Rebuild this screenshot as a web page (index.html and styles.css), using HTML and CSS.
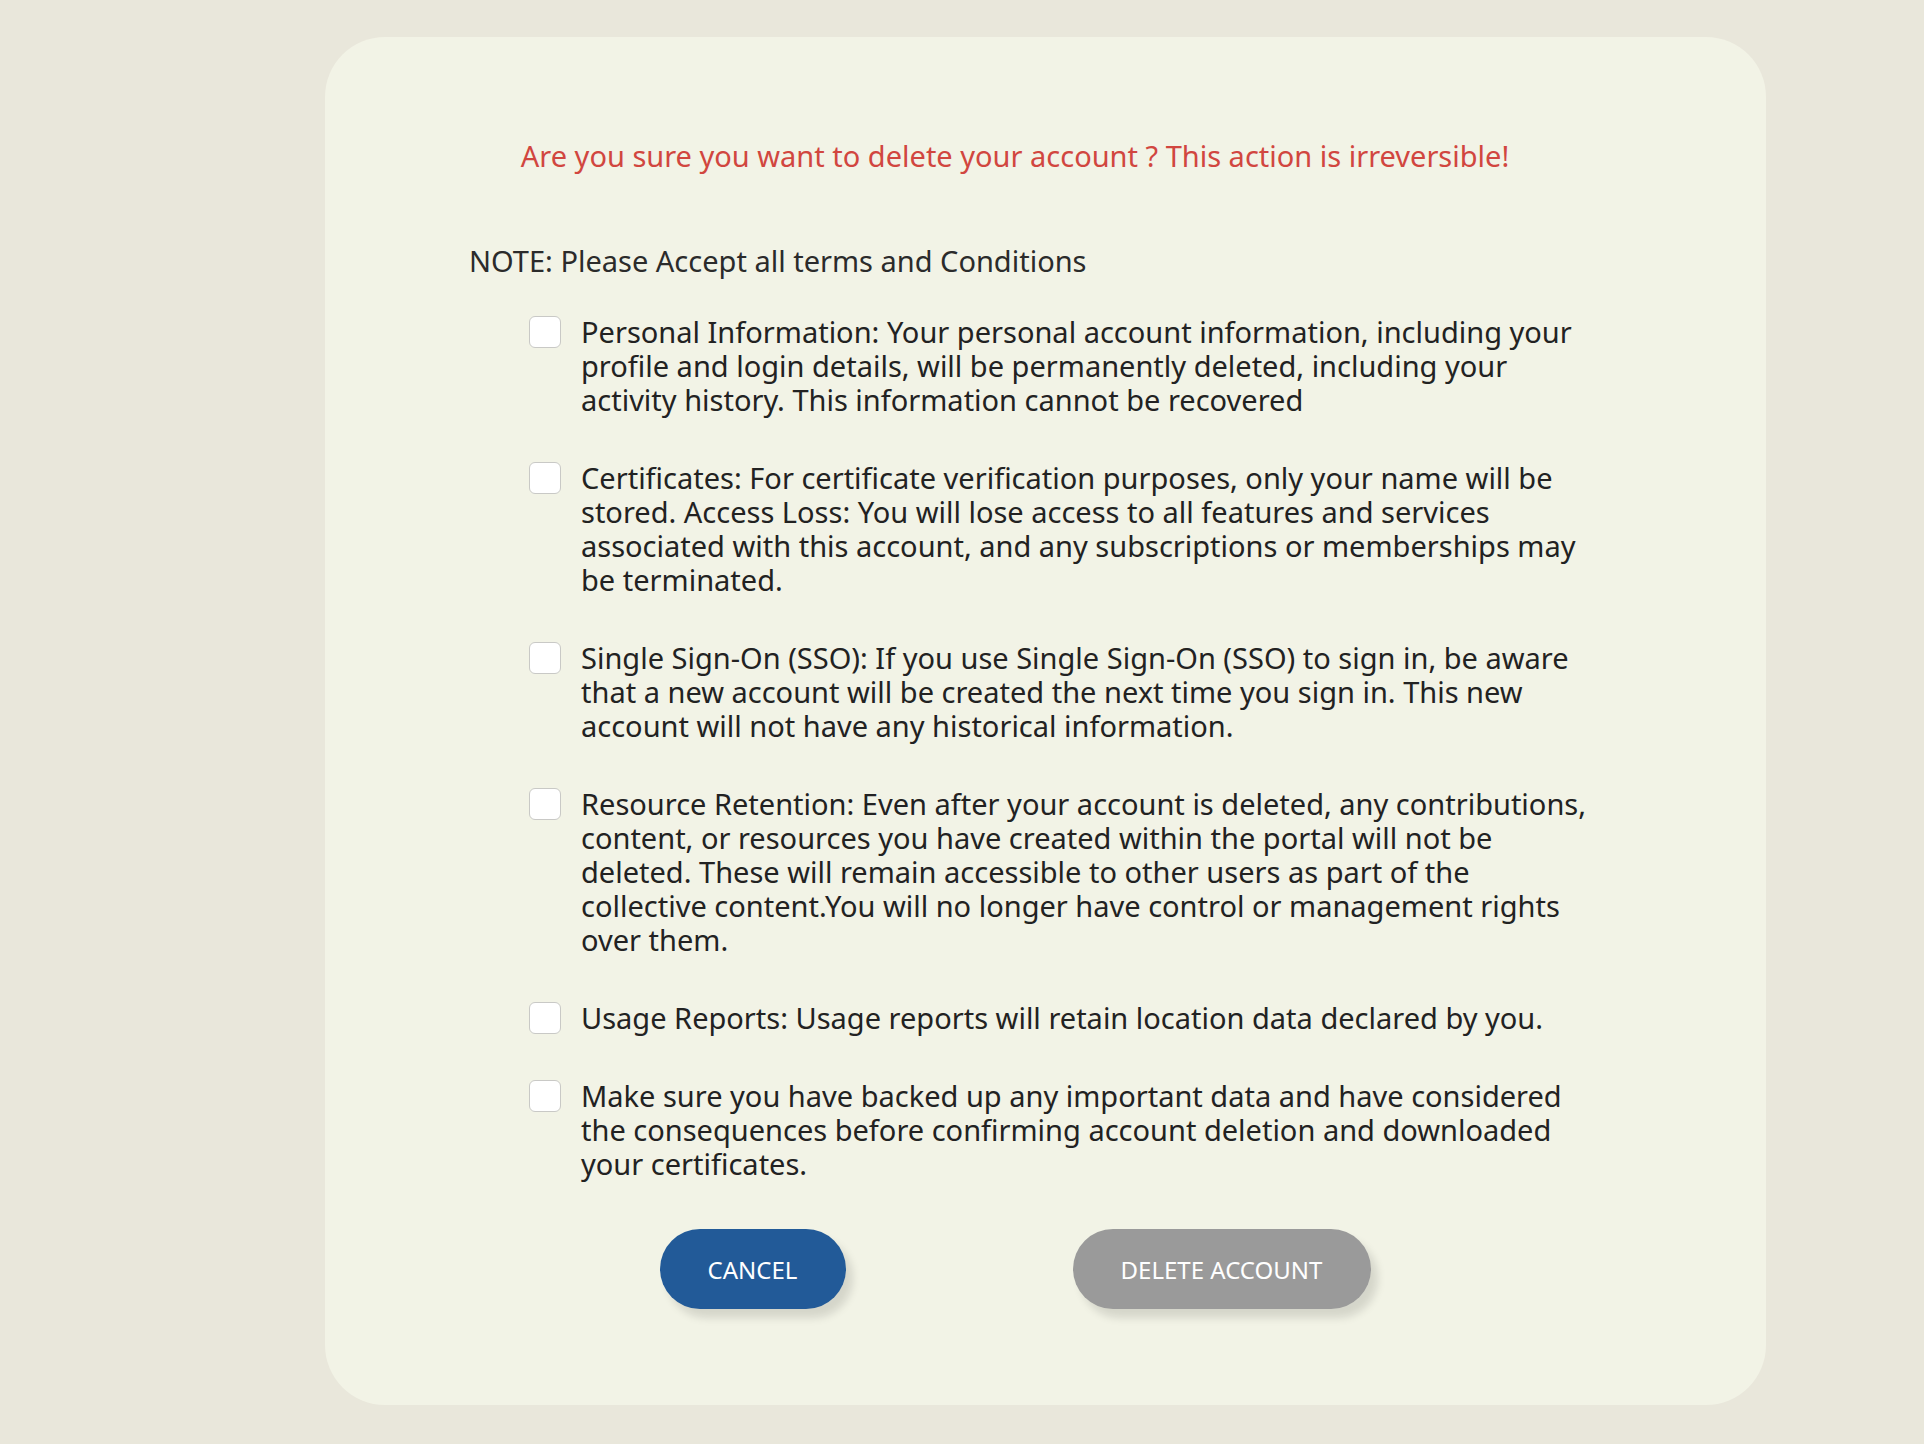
FILE: index.html
```html
<!DOCTYPE html>
<html lang="en">
<head>
<meta charset="utf-8">
<title>Delete account</title>
<link rel="stylesheet" href="styles.css">
</head>
<body>
<main class="page">
  <section class="card">
    <p class="warning">Are you sure you want to delete your account ? This action is irreversible!</p>
    <p class="note">NOTE: Please Accept all terms and Conditions</p>
    <ul class="terms">
      <li class="term"><span class="box"></span><span class="text">Personal Information: Your personal account information, including your profile and login details, will be permanently deleted, including your activity history. This information cannot be recovered</span></li>
      <li class="term"><span class="box"></span><span class="text">Certificates: For certificate verification purposes, only your name will be stored. Access Loss: You will lose access to all features and services associated with this account, and any subscriptions or memberships may be terminated.</span></li>
      <li class="term"><span class="box"></span><span class="text">Single Sign-On (SSO): If you use Single Sign-On (SSO) to sign in, be aware that a new account will be created the next time you sign in. This new account will not have any historical information.</span></li>
      <li class="term"><span class="box"></span><span class="text">Resource Retention: Even after your account is deleted, any contributions, content, or resources you have created within the portal will not be deleted. These will remain accessible to other users as part of the collective content.You will no longer have control or management rights over them.</span></li>
      <li class="term"><span class="box"></span><span class="text">Usage Reports: Usage reports will retain location data declared by you.</span></li>
      <li class="term"><span class="box"></span><span class="text">Make sure you have backed up any important data and have considered the consequences before confirming account deletion and downloaded your certificates.</span></li>
    </ul>
    <div class="actions">
      <button class="btn btn-cancel">CANCEL</button>
      <button class="btn btn-delete">DELETE ACCOUNT</button>
    </div>
  </section>
</main>
</body>
</html>
```
FILE: styles.css
```css
html, body {
  margin: 0;
  padding: 0;
  background: #e9e7db;
  font-family: "Noto Sans", "Open Sans", sans-serif;
}
.page {
  padding: 37px 0 40px 325px;
}
.card {
  width: 1441px;
  box-sizing: border-box;
  background: #f2f3e6;
  border-radius: 60px;
  padding: 102px 205px 96px 144px;
}
.warning {
  margin: 0;
  text-align: center;
  color: #d1463f;
  font-size: 29px;
  line-height: 34px;
}
.note {
  margin: 71px 0 0;
  color: #2b2b2b;
  font-size: 29px;
  line-height: 34px;
}
.terms {
  list-style: none;
  margin: 37px -30px 0 60px;
  padding: 0;
  display: flex;
  flex-direction: column;
  gap: 44px;
}
.term {
  display: flex;
  gap: 20px;
  align-items: flex-start;
}
.box {
  flex: 0 0 auto;
  width: 30px;
  height: 30px;
  margin-top: 1px;
  background: #fff;
  border: 1px solid #c9c9c6;
  border-radius: 6px;
}
.text {
  width: 1005px;
  color: #222;
  font-size: 29px;
  line-height: 34px;
}
.actions {
  margin-top: 48px;
  display: flex;
  justify-content: center;
  gap: 227px;
}
.btn {
  height: 80px;
  border: none;
  border-radius: 40px;
  color: #fff;
  font-family: "Noto Sans", "Open Sans", sans-serif;
  font-size: 24px;
  box-shadow: 7px 9px 9px rgba(0, 0, 0, 0.12);
}
.btn-cancel {
  width: 186px;
  background: #225a98;
}
.btn-delete {
  width: 298px;
  background: #9a9a9a;
}
```
